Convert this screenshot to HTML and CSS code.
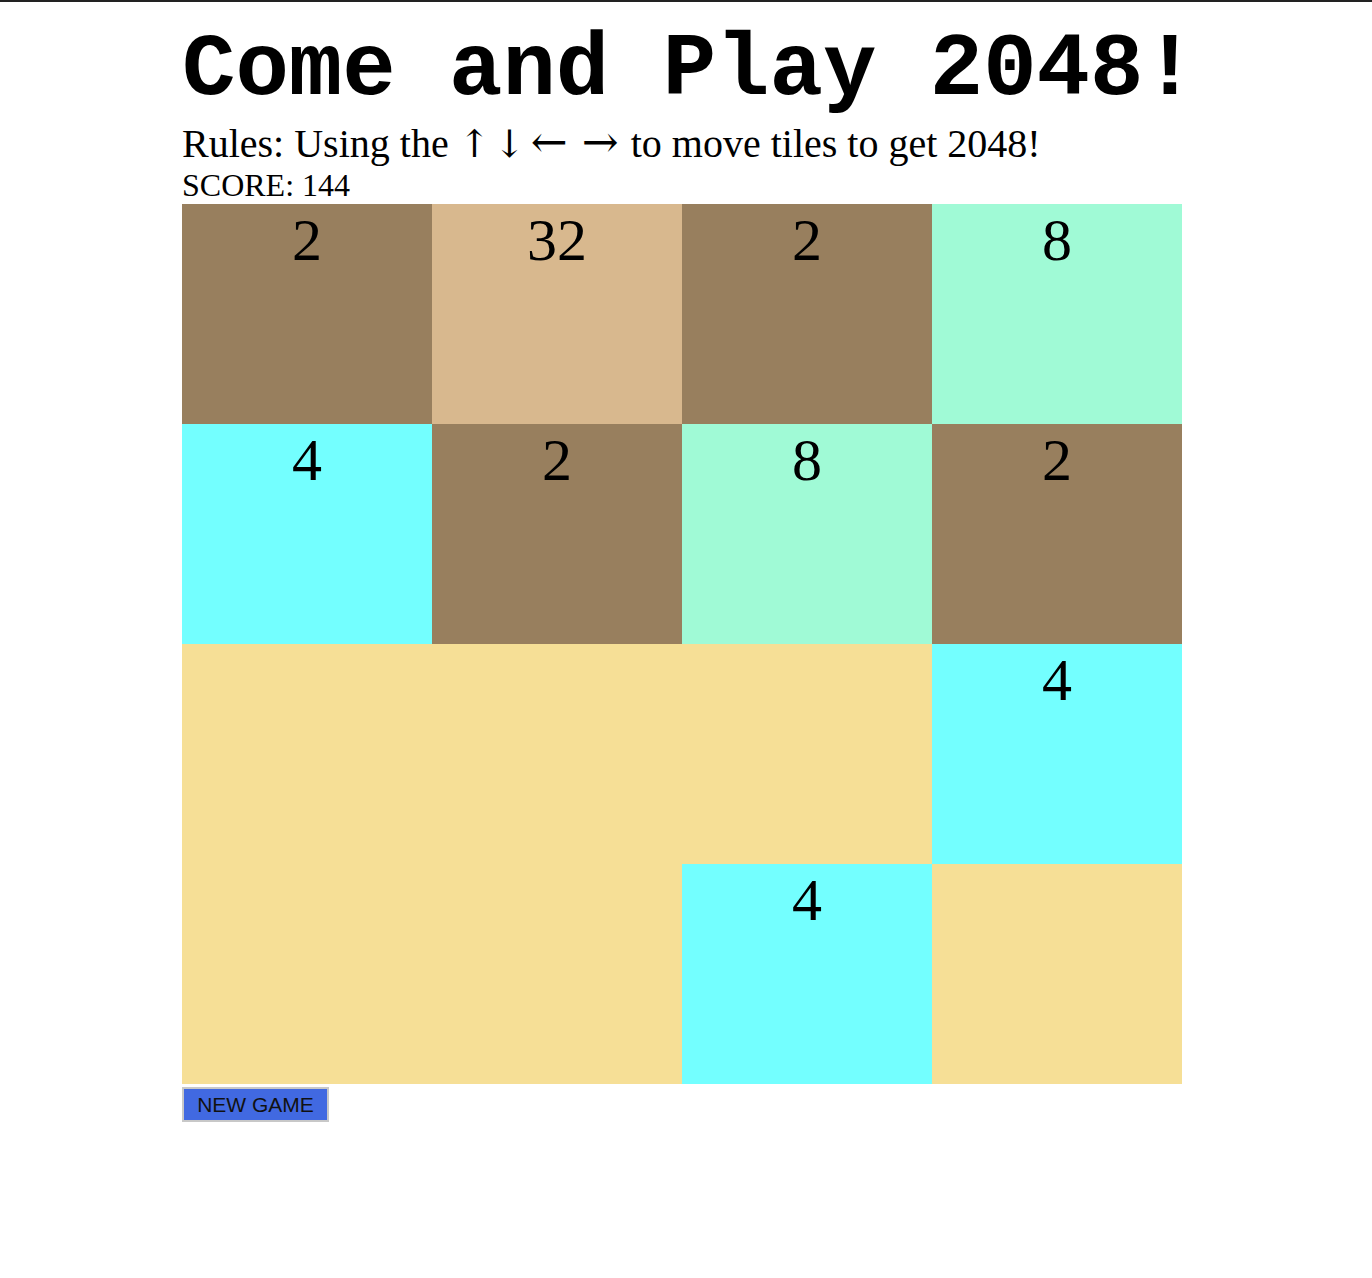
FILE: index.html
```html
<!DOCTYPE html>
<html lang="en">
<head>
  <meta charset="UTF-8">
  <meta name="viewport" content="width=device-width, initial-scale=1.0">
  <title>2048</title>
  <link rel="stylesheet" href="styles.css">
</head>
<body>
  <div id="juego">
    <h1 class="titulo">Come and Play 2048!</h1>
    <p class="reglas">Rules: Using the <span class="flecha">&uarr;</span> <span class="flecha">&darr;</span> <span class="flecha ancha">&larr;</span> <span class="flecha ancha">&rarr;</span> to move tiles to get 2048!</p>
    <p class="puntaje">SCORE: <span id="score">144</span></p>

    <div id="tablero">
      <div class="celda t2">2</div>
      <div class="celda t32">32</div>
      <div class="celda t2">2</div>
      <div class="celda t8">8</div>

      <div class="celda t4">4</div>
      <div class="celda t2">2</div>
      <div class="celda t8">8</div>
      <div class="celda t2">2</div>

      <div class="celda"></div>
      <div class="celda"></div>
      <div class="celda"></div>
      <div class="celda t4">4</div>

      <div class="celda"></div>
      <div class="celda"></div>
      <div class="celda t4">4</div>
      <div class="celda"></div>
    </div>

    <button class="nuevo">NEW GAME</button>
  </div>
</body>
</html>
```

FILE: styles.css
```css
html {
  border-top: 2px solid #222; /* linea oscura arriba */
}

body {
  margin: 0;
  font-family: 'Liberation Serif', 'Times New Roman', serif;
  color: #000;
  background-color: #fff;
}

#juego {
  width: 1000px;
  margin-left: 182px;
}

.titulo {
  font-family: 'Liberation Mono', 'Courier New', monospace;
  font-weight: bold;
  font-size: 89px;
  line-height: 100px;
  margin: 19px 0 0 0;
  white-space: nowrap;
}

.reglas {
  font-size: 40px;
  line-height: 46px;
  margin: 0;
  white-space: nowrap;
}

.flecha {
  display: inline-block;
  width: 25px;
  text-align: center;
  font-family: 'DejaVu Serif', serif;
  font-size: 38px;
  line-height: 40px;
}

.flecha.ancha {
  width: 41px;
  font-size: 44px;
}

.puntaje {
  font-size: 32px;
  line-height: 37px;
  margin: 0;
}

#tablero {
  display: grid;
  grid-template-columns: repeat(4, 250px);
  grid-auto-rows: 220px;
}

.celda {
  background-color: #f6df96; /* celda vacia */
  text-align: center;
  font-size: 60px;
  line-height: 72px;
}

.t2 { background-color: #987f5e; }
.t4 { background-color: #73ffff; }
.t8 { background-color: #a0fad6; }
.t32 { background-color: #d8b88e; }

.nuevo {
  display: block;
  margin-top: 3px;
  width: 147px;
  height: 35px;
  padding: 0;
  font-family: 'Liberation Sans', Arial, sans-serif;
  font-size: 21px;
  color: #111;
  background-color: #4169e1;
  border: 2px solid #c8c8c8;
  border-radius: 0;
}
```
